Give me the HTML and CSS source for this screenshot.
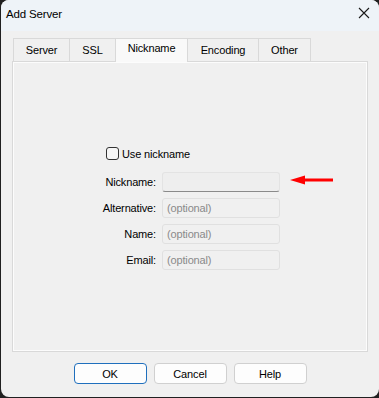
FILE: index.html
```html
<!DOCTYPE html>
<html lang="en">
<head>
  <meta charset="UTF-8" />
  <title>Add Server</title>
  <link rel="stylesheet" href="styles.css">
</head>
<body>

<div class="window">
  <div class="titlebar">
    <span class="title">Add Server</span>
    <svg class="close" width="12" height="12" viewBox="0 0 12 12">
      <path d="M1 1 L11 11 M11 1 L1 11" stroke="#1a1a1a" stroke-width="1.1" fill="none" />
    </svg>
  </div>

  <div class="content">
    <div class="tabs">
      <div class="tab tab-server">Server</div>
      <div class="tab tab-ssl">SSL</div>
      <div class="tab tab-nick active">Nickname</div>
      <div class="tab tab-enc">Encoding</div>
      <div class="tab tab-other">Other</div>
    </div>

    <div class="panel">
      <label class="check-row">
        <span class="checkbox"></span>
        <span>Use nickname</span>
      </label>

      <div class="form">
        <label class="lbl">Nickname:</label>
        <div class="field field-main"></div>
        <label class="lbl">Alternative:</label>
        <div class="field">(optional)</div>
        <label class="lbl">Name:</label>
        <div class="field">(optional)</div>
        <label class="lbl">Email:</label>
        <div class="field">(optional)</div>
      </div>

      <!-- annotation arrow pointing at the nickname field -->
      <svg class="arrow" width="46" height="12" viewBox="0 0 46 12">
        <path d="M0 6 L15 1.5 L15 10.5 Z" fill="#ff0000" />
        <rect x="14" y="4.5" width="29" height="3" fill="#ff0000" />
      </svg>
    </div>

    <div class="buttons">
      <button class="btn default">OK</button>
      <button class="btn">Cancel</button>
      <button class="btn">Help</button>
    </div>
  </div>
</div>

</body>
</html>
```

FILE: styles.css
```css
html, body {
  margin: 0;
  padding: 0;
}

body {
  background: #202020;
  font-family: 'Liberation Sans', Arial, sans-serif;
  font-size: 11px;
  letter-spacing: -0.15px;
  color: #000;
  width: 379px;
  height: 398px;
  overflow: hidden;
}

.window {
  margin-left: 1px;
  width: 378px;
  height: 397px;
  background: #f0f0f0;
  border-radius: 8px;
  overflow: hidden;
  display: flex;
  flex-direction: column;
}

.titlebar {
  height: 31px;
  background: #eef3f8;
  display: flex;
  align-items: center;
  justify-content: space-between;
  padding: 0 9px 0 5px;
  flex-shrink: 0;
}

.title {
  font-size: 11.5px;
  margin-top: -4px;
}

.close {
  margin-top: -5px;
}

.content {
  flex: 1;
  padding: 6px 11px 0 11px;
  display: flex;
  flex-direction: column;
}

.tabs {
  display: flex;
  align-items: flex-end;
  height: 24px;
  padding-left: 1px;
  position: relative;
  z-index: 1;
}

.tab {
  height: 22px;
  border: 1px solid #d9d9d9;
  border-bottom: none;
  margin-right: -1px;
  background: #f0f0f0;
  display: flex;
  align-items: center;
  justify-content: center;
}

.tab.active {
  height: 24px;
  background: #f9f9f9;
  margin-bottom: -1px;
  padding-bottom: 1px;
  align-items: flex-start;
  padding-top: 3px;
  box-sizing: border-box;
}

.tab-server { width: 55px; }
.tab-ssl { width: 45px; }
.tab-nick { width: 73px; }
.tab-enc { width: 70px; }
.tab-other { width: 51px; }

.panel {
  border: 1px solid #d9d9d9;
  box-shadow: inset -1px -1px 0 #fcfcfc, inset 1px 1px 0 #fcfcfc;
  position: relative;
  padding-top: 85px;
  height: 204px;
}

.check-row {
  display: flex;
  align-items: center;
  gap: 3px;
  margin-left: 93px;
  height: 13px;
}

.checkbox {
  width: 11px;
  height: 11px;
  border: 1px solid #333;
  border-radius: 3px;
  background: #f6f6f6;
}

.form {
  display: grid;
  grid-template-columns: 143px 118px;
  column-gap: 6px;
  row-gap: 6px;
  margin-top: 12px;
  align-items: center;
}

.lbl {
  text-align: right;
}

.field {
  height: 18px;
  border: 1px solid #e0e0e0;
  border-radius: 3px;
  background: #f0f0f0;
  color: #8a8a8a;
  padding-left: 4px;
  line-height: 18px;
}

.field-main {
  border-color: #e3e3e3;
  border-bottom-color: #8a8a8a;
  background: #eeeeee;
}

.arrow {
  position: absolute;
  left: 277px;
  top: 112px;
}

.buttons {
  display: flex;
  justify-content: center;
  gap: 7px;
  margin-top: 11px;
}

.btn {
  width: 73px;
  height: 21px;
  border: 1px solid #d0d0d0;
  border-radius: 4px;
  background: #fdfdfd;
  font-family: inherit;
  font-size: 11px;
  letter-spacing: -0.15px;
  color: #000;
  padding: 0;
}

.btn.default {
  border-color: #1f6fbd;
}
```
